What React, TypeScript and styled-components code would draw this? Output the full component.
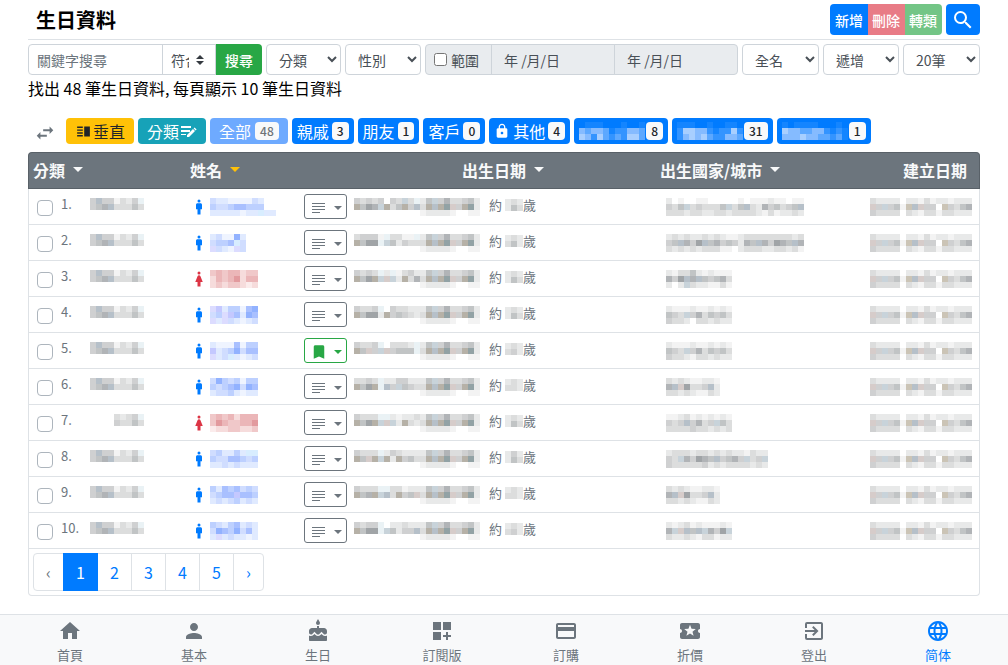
import React from "react";
import styled, { createGlobalStyle, css } from "styled-components";
import {
  MdSearch,
  MdSwapHoriz,
  MdVerticalSplit,
  MdLock,
  MdMan,
  MdWoman,
  MdBookmark,
  MdHome,
  MdPerson,
  MdCake,
  MdDashboardCustomize,
  MdCreditCard,
  MdLocalPlay,
  MdExitToApp,
  MdLanguage,
} from "react-icons/md";

const color = {
  primary: "#007bff",
  success: "#28a745",
  danger: "#dc3545",
  warning: "#ffc107",
  info: "#17a2b8",
  grey: "#6c757d",
  dark: "#212529",
  field: "#495057",
  border: "#dee2e6",
  fieldBorder: "#ced4da",
  disabled: "#e9ecef",
  light: "#f8f9fa",
};

const GlobalStyle = createGlobalStyle`
  *, *::before, *::after { box-sizing: border-box; }
  body {
    margin: 0;
    background: #fff;
    color: ${color.dark};
    font-family: "Noto Sans CJK TC", "Noto Sans", sans-serif;
    font-size: 16px;
    line-height: 24px;
  }
  button, input, select { font-family: inherit; margin: 0; }
  svg { display: block; flex: none; }
`;

const Page = styled.div`
  display: flex;
  flex-direction: column;
  min-height: 100vh;
`;

const Content = styled.main`
  padding: 0 28px;
`;

/* ---------- Title ---------- */

const TitleBar = styled.header`
  display: flex;
  align-items: center;
  justify-content: space-between;
  height: 40px;
  padding-left: 8px;
  border-bottom: 1px solid ${color.border};
`;

const Title = styled.h1`
  margin: 0;
  font-size: 20px;
  font-weight: 700;
  color: #000;
`;

const Actions = styled.div`
  display: flex;
  gap: 4px;
`;

const ButtonGroup = styled.div`
  display: flex;
  border-radius: 4px;
  overflow: hidden;
`;

const ActionButton = styled.button<{ $tone: string }>`
  display: flex;
  align-items: center;
  height: 31px;
  padding: 0 5px;
  border: 0;
  background: ${(p) => p.$tone};
  color: #fff;
  font-size: 14px;
  font-weight: 500;
  &:disabled {
    opacity: 0.65;
  }
  & + & {
    padding-left: 4px;
  }
`;

const SearchToggle = styled(ActionButton)`
  border-radius: 4px;
`;

/* ---------- Filters ---------- */

const Filters = styled.form`
  display: grid;
  grid-template-columns: 234fr 75fr 76fr 313fr 77fr 76fr 77fr;
  gap: 4px;
  padding-top: 4px;
`;

const FieldGroup = styled.div`
  display: flex;
  min-width: 0;
`;

const fieldBase = css`
  height: 31px;
  min-width: 0;
  border: 1px solid ${color.fieldBorder};
  background: #fff;
  color: ${color.field};
  font-size: 14px;
`;

const KeywordInput = styled.input`
  ${fieldBase}
  flex: 1;
  padding: 4px 8px;
  border-radius: 4px 0 0 4px;
  &::placeholder {
    color: ${color.grey};
    opacity: 1;
  }
`;

const MatchBox = styled.div`
  position: relative;
  width: 54px;
  margin-left: -1px;
`;

const MatchSelect = styled.select`
  ${fieldBase}
  appearance: none;
  width: 100%;
  padding: 0 26px 0 8px;
  border-radius: 0;
`;

const MatchArrows = styled.svg`
  position: absolute;
  top: 11px;
  right: 12px;
  pointer-events: none;
`;

const SubmitButton = styled.button`
  width: 46px;
  height: 31px;
  padding: 0;
  border: 0;
  border-radius: 0 4px 4px 0;
  background: ${color.success};
  color: #fff;
  font-size: 14px;
  font-weight: 500;
`;

const FilterSelect = styled.select`
  ${fieldBase}
  width: 100%;
  padding: 4px 0 4px 8px;
  border-radius: 4px;
`;

const RangeLabel = styled.label`
  ${fieldBase}
  display: flex;
  align-items: center;
  gap: 4px;
  width: 67px;
  padding-left: 8px;
  background: ${color.disabled};
  border-radius: 4px 0 0 4px;
  input {
    width: 13px;
    height: 13px;
  }
`;

const DateInput = styled.input`
  ${fieldBase}
  flex: 1;
  width: 0;
  margin-left: -1px;
  padding: 4px 12px;
  background: ${color.disabled};
  &:last-child {
    border-radius: 0 4px 4px 0;
  }
`;

const Summary = styled.p`
  margin: 1px 0 0;
  color: #000;
`;

/* ---------- Category bar ---------- */

const CategoryBar = styled.nav`
  display: flex;
  flex-wrap: wrap;
  align-items: center;
  gap: 4px;
  padding: 18px 0 8px 6px;
`;

const SwapButton = styled.button`
  display: flex;
  width: 28px;
  height: 26px;
  padding: 4px 0 0;
  border: 0;
  background: none;
  color: ${color.grey};
`;

const Pill = styled.button<{ $tone?: string; $wide?: boolean; $tight?: boolean }>`
  display: flex;
  align-items: center;
  gap: ${(p) => (p.$tone || p.$tight ? 1 : p.$wide ? 4 : 3)}px;
  height: 26px;
  padding: 0 ${(p) => (p.$wide ? 9 : 5)}px;
  border: 0;
  border-radius: 4px;
  background: ${(p) => p.$tone || color.primary};
  color: ${(p) => (p.$tone === color.warning ? color.dark : "#fff")};
  font-size: 16px;
  line-height: 24px;
  white-space: nowrap;
  &:disabled {
    background: #6eaaff;
  }
`;

const Count = styled.span<{ $muted?: boolean }>`
  height: 18px;
  padding: 0 5px;
  border-radius: 4px;
  background: ${color.light};
  color: ${(p) => (p.$muted ? "#6f7478" : color.dark)};
  font-size: 12px;
  font-weight: 500;
  line-height: 18px;
`;

/* ---------- Records ---------- */

const Records = styled.table`
  width: 100%;
  table-layout: fixed;
  border-collapse: separate;
  border-spacing: 0;
  font-size: 13px;
  color: ${color.grey};
`;

const Col = styled.col<{ $w?: number }>`
  width: ${(p) => (p.$w ? `${p.$w}px` : "auto")};
`;

const HeadCell = styled.th<{ $align?: string }>`
  height: 37px;
  padding: 0 4px 2px;
  border: 0 solid #596168;
  border-width: 1px 0;
  background: ${color.grey};
  color: ${color.light};
  font-size: 16px;
  font-weight: 700;
  text-align: ${(p) => p.$align || "left"};
  white-space: nowrap;
  &:first-child {
    border-left-width: 1px;
    border-top-left-radius: 4px;
  }
  &:last-child {
    padding-right: 12px;
    border-right-width: 1px;
    border-top-right-radius: 4px;
  }
`;

const SortButton = styled.button`
  display: inline-flex;
  align-items: center;
  gap: 8px;
  padding: 0;
  border: 0;
  background: none;
  color: inherit;
  font-size: 16px;
  font-weight: 700;
  line-height: 24px;
`;

const Caret = styled.span<{ $tone?: string }>`
  border: 5px solid transparent;
  border-top-color: ${(p) => p.$tone || "currentColor"};
  border-bottom: 0;
`;

const Cell = styled.td`
  height: 36px;
  padding: 0;
  border-bottom: 1px solid ${color.border};
  &:first-child {
    border-left: 1px solid ${color.border};
  }
  &:last-child {
    padding-right: 7px;
    border-right: 1px solid ${color.border};
  }
`;

const CellLine = styled.div<{ $gap?: number; $indent?: number; $end?: boolean }>`
  display: flex;
  align-items: center;
  gap: ${(p) => p.$gap || 0}px;
  padding-left: ${(p) => p.$indent || 0}px;
  justify-content: ${(p) => (p.$end ? "flex-end" : "flex-start")};
  line-height: 20px;
`;

const RowCheck = styled.input`
  appearance: none;
  width: 16px;
  height: 16px;
  margin-top: 3px;
  border: 1px solid #adb5bd;
  border-radius: 4px;
  background: #fff;
`;

const Category = styled.span`
  display: flex;
  align-items: center;
  justify-content: space-between;
  width: 83px;
  height: 24px;
  padding-bottom: 6px;
`;

const Age = styled.span`
  display: flex;
  align-items: center;
  padding: 0 0 4px 6px;
  svg {
    margin-left: 3px;
  }
`;

const MenuButton = styled.button<{ $saved?: boolean }>`
  display: flex;
  align-items: center;
  justify-content: space-between;
  width: 43px;
  height: 25px;
  margin-left: 2px;
  padding: 2px 4px 0 5px;
  border: 1px solid ${(p) => (p.$saved ? color.success : color.grey)};
  border-radius: 3px;
  background: #fff;
  color: ${(p) => (p.$saved ? color.success : color.grey)};
`;

const SmallCaret = styled(Caret)`
  border-width: 4px 4px 0;
`;

const Footer = styled.div`
  padding: 4px;
  border: 1px solid ${color.border};
  border-top: 0;
  border-radius: 0 0 4px 4px;
`;

const Pager = styled.nav`
  display: flex;
`;

const PageLink = styled.a<{ $current?: boolean; $edge?: boolean }>`
  display: flex;
  align-items: center;
  justify-content: center;
  width: ${(p) => (p.$edge ? 31 : 35)}px;
  height: 38px;
  border: 1px solid ${(p) => (p.$current ? color.primary : color.border)};
  background: ${(p) => (p.$current ? color.primary : "#fff")};
  color: ${(p) => (p.$current ? "#fff" : color.primary)};
  position: relative;
  z-index: ${(p) => (p.$current ? 1 : 0)};
  text-decoration: none;
  &:first-child {
    border-radius: 4px 0 0 4px;
    color: ${color.grey};
  }
  &:last-child {
    border-radius: 0 4px 4px 0;
  }
  & + & {
    margin-left: -1px;
  }
`;

/* ---------- Bottom navigation ---------- */

const BottomNav = styled.nav`
  display: flex;
  height: 51px;
  margin-top: auto;
  padding: 4px 8px 0;
  border-top: 1px solid ${color.border};
  background: ${color.light};
`;

const NavItem = styled.a<{ $active?: boolean }>`
  flex: 1;
  display: flex;
  flex-direction: column;
  align-items: center;
  color: ${(p) => (p.$active ? color.primary : color.grey)};
  font-size: 13px;
  line-height: 24px;
  text-decoration: none;
`;

/* ---------- Icons ---------- */

const NoteIcon = () => (
  <svg width="17" height="16" viewBox="0 0 17 16" fill="currentColor" aria-hidden="true">
    <path d="M2 3h13v1H2zM2 6h13v1H2zM2 9h13v1H2zM2 12h8v1H2z" />
  </svg>
);

const EditListIcon = () => (
  <svg width="17" height="16" viewBox="0 0 17 16" fill="currentColor" aria-hidden="true">
    <path d="M1 3h10v2H1zM1 7h9v2H1zM1 11h5v1H1z" />
    <path d="M7 14v-2l6-6 2 2-6 6zM13.600 5.400l1-1 2 2-1 1z" />
  </svg>
);

/* ---------- Censored values, drawn as 6px tiles ---------- */

type Palette = Record<string, string>;

const greys: Palette = {
  a: "#f3f3f3", b: "#e8e9e9", c: "#dcdddd", d: "#cfd0d1", e: "#c1c4c5",
  f: "#b1b4b7", g: "#a0a4a7", h: "#b6c0c9", i: "#cbc4b6", j: "#d6ccca",
  k: "#c8d3da", l: "#92a2a5", m: "#b6b1a7", n: "#eaf2f5", o: "#e0deee",
};
const blues: Palette = {
  a: "#eff4ff", b: "#e0eaff", c: "#d0ddff", d: "#bdd0ff", e: "#a9c0ff",
  f: "#92b2ff", g: "#dcdcff", h: "#c4c8ff", n: "#d8edff",
};
const reds: Palette = {
  a: "#fbecec", b: "#f6dcdc", c: "#f0c8c9", d: "#ebb6b8", e: "#e29a9e",
};
const whites: Palette = {
  a: "#1485ff", b: "#3394ff", c: "#5ca8ff", d: "#85bbff", e: "#a8cfff",
};

function Mosaic({ rows, palette = greys }: { rows: string[]; palette?: Palette }) {
  const cols = Math.max(...rows.map((r) => r.length));
  return (
    <svg width={cols * 6} height={rows.length * 6} shapeRendering="crispEdges" aria-hidden="true">
      {rows.map((row, y) =>
        [...row].map((c, x) =>
          palette[c] ? (
            <rect key={`${x}-${y}`} x={x * 6} y={y * 6} width={6} height={6} fill={palette[c]} />
          ) : null
        )
      )}
    </svg>
  );
}

/* ---------- Data ---------- */

const fullCategory = ["dhddacbdn", "defhcccec"];
const shortCategory = ["cbcdn", "dccec"];
const dateTail = ["bekdfccdeb", "cmhmljdmlb", "abbbba..aa"];
const dateHead: [string, string][] = [
  ["dcdcd.dckcn", "megfkmcemdh"],
  ["cdddanccaan", "meggnkebdcc"],
  ["dcdcnbnacdb", "megmkjkbmcf"],
  ["dccdn.dccbb", "meggbmdedcb"],
  ["dccdn.cccbn", "mejdkjdeeen"],
  ["ccdcnbbddbb", "megmnhdkedc"],
  ["dcccnnbabbc", "megmkjkbmcb"],
  ["dcccnbdcbbb", "mejmkmbmdec"],
  ["dcccnnccabb", "mefmkhcmdej"],
  ["dcddn.bbcbb", "meggnkebddh"],
];
const createdTiles = ["cbbbb.bbacabbabbb", "jdkdeaihjdd.idcef", "dcccc.cbaccaccbbb"];

type Person = {
  female?: boolean;
  saved?: boolean;
  name: string[];
  age: string[];
  place: string[];
};

const people: Person[] = [
  { name: ["cbbaaaacb", "dccdeeddd", "bbbbbabbnbb"], age: ["bcb", "bec"],
    place: ["b.a..aa.....a.aaabaa.aa", "dcekcdcccekcehcbfdecdeh", "cccbccbbccbccccbacabbcb"] },
  { name: ["bcaafb", "cddenc", "gcbagc"], age: ["bcb", "ceb"],
    place: ["bcbcbbcbcbaabccccccccbc", "dehfdghefdedbfehfdgfehf", "cbcbcbcccaa.bcccbbccbca"] },
  { female: true, name: ["cdcddbcc", "bdcdebdd", "bcbccbab"], age: ["bcb", "bec"],
    place: ["baccebabaaa", "fdghfhedefc", "b.bkcbbaaca"] },
  { name: ["ghbddaef", "cdghebfe", "gbgcbabc"], age: ["bcb", "bec"],
    place: ["baaabaababa", "edckdfcedec", "dccb.ccbcbb"] },
  { saved: true, name: ["baaaeadd", "hbcdfcee", "gbcnbabc"], age: ["bcb", "cdb"],
    place: ["baaabaababa", "edckdfcedec", "dccbaccbcbb"] },
  { name: ["cfdcdadd", "dcdefcfe", "bccdbabb"], age: ["bcb", "ccb"],
    place: ["cbcbaabba", "fhjgccdhb", "ccbcbaacb"] },
  { female: true, name: ["cdcdbddd", "cedccdde", "abbccbbc"], age: ["bcb", "bec"],
    place: ["aabcabababa", "dcdhdfcdkec", "ccccdccbcbc"] },
  { name: ["cdbbdbnn", "dcceedcd", "bbcbcbbb"], age: ["bdb", "bec"],
    place: ["bcccbccbcbcbbacbb", "dckfdgfehdefdkcdk", "dcccccdbcbccccbcb"] },
  { name: ["dbedecdc", "cdeeheed", "bcbcdbcb"], age: ["bcb", "ccb"],
    place: ["cbcbaabba", "fhjgccdhb", "ccbcbaacb"] },
  { name: ["dcbdebcb", "cfedfceb", "bgbcbbab"], age: ["bcb", "cdb"],
    place: ["babcabaaaba", "fkjhehkfdgk", "cbbcbaccabb"] },
];

const navItems = [
  { label: "首頁", Icon: MdHome },
  { label: "基本", Icon: MdPerson },
  { label: "生日", Icon: MdCake },
  { label: "訂閱版", Icon: MdDashboardCustomize },
  { label: "訂購", Icon: MdCreditCard },
  { label: "折價", Icon: MdLocalPlay },
  { label: "登出", Icon: MdExitToApp },
  { label: "简体", Icon: MdLanguage, active: true },
];

const groups: { text?: string; tiles?: string[]; count: number; locked?: boolean }[] = [
  { text: "親戚", count: 3 },
  { text: "朋友", count: 1 },
  { text: "客戶", count: 0 },
  { text: "其他", count: 4, locked: true },
  { tiles: [".aaa...a..a", "dcddcabbddc", "edbecbcbeec"], count: 8 },
  { tiles: ["aaa..a..aa.", "beeddbabbeb", "bdedecbbddc"], count: 31 },
  { tiles: ["a.aaaa...a.", "eddccddbaba", "dddeddccbca"], count: 1 },
];

export default function App() {
  return (
    <Page>
      <GlobalStyle />
      <Content>
        <TitleBar>
          <Title>生日資料</Title>
          <Actions>
            <ButtonGroup>
              <ActionButton type="button" $tone={color.primary}>新增</ActionButton>
              <ActionButton type="button" $tone={color.danger} disabled>刪除</ActionButton>
              <ActionButton type="button" $tone={color.success} disabled>轉類</ActionButton>
            </ButtonGroup>
            <SearchToggle type="button" $tone={color.primary} aria-label="搜尋">
              <MdSearch size={24} />
            </SearchToggle>
          </Actions>
        </TitleBar>

        <Filters onSubmit={(e) => e.preventDefault()}>
          <FieldGroup>
            <KeywordInput size={1} placeholder="關鍵字搜尋" aria-label="關鍵字搜尋" />
            <MatchBox>
              <MatchSelect aria-label="符合">
                <option>符合</option>
              </MatchSelect>
              <MatchArrows width="8" height="10" viewBox="0 0 8 10" fill="#343a40">
                <path d="M4 0L0 4h8zM4 10L0 6h8z" />
              </MatchArrows>
            </MatchBox>
            <SubmitButton>搜尋</SubmitButton>
          </FieldGroup>
          <FilterSelect aria-label="分類"><option>分類</option></FilterSelect>
          <FilterSelect aria-label="性別"><option>性別</option></FilterSelect>
          <FieldGroup>
            <RangeLabel>
              <input type="checkbox" />
              範圍
            </RangeLabel>
            <DateInput disabled defaultValue="年 /月/日" aria-label="開始日期" />
            <DateInput disabled defaultValue="年 /月/日" aria-label="結束日期" />
          </FieldGroup>
          <FilterSelect aria-label="姓名格式"><option>全名</option></FilterSelect>
          <FilterSelect aria-label="排序"><option>遞增</option></FilterSelect>
          <FilterSelect aria-label="每頁筆數"><option>20筆</option></FilterSelect>
        </Filters>

        <Summary>找出 48 筆生日資料, 每頁顯示 10 筆生日資料</Summary>

        <CategoryBar>
          <SwapButton type="button" aria-label="切換">
            <MdSwapHoriz size={22} />
          </SwapButton>
          <Pill type="button" $wide $tone={color.warning}>
            <MdVerticalSplit size={17} />
            垂直
          </Pill>
          <Pill type="button" $wide $tone={color.info}>
            分類
            <EditListIcon />
          </Pill>
          <Pill type="button" $wide disabled>
            全部 <Count $muted>48</Count>
          </Pill>
          {groups.map((g, i) => (
            <Pill type="button" key={i} $tight={!!g.tiles}>
              {g.locked && <MdLock size={16} />}
              {g.text}
              {g.tiles && <Mosaic rows={g.tiles} palette={whites} />}
              <Count>{g.count}</Count>
            </Pill>
          ))}
        </CategoryBar>

        <Records>
          <colgroup>
            <Col $w={158} />
            <Col $w={116} />
            <Col $w={48} />
            <Col $w={306} />
            <Col />
            <Col $w={120} />
          </colgroup>
          <thead>
            <tr>
              <HeadCell><SortButton type="button">分類 <Caret /></SortButton></HeadCell>
              <HeadCell><SortButton type="button">姓名 <Caret $tone={color.warning} /></SortButton></HeadCell>
              <HeadCell />
              <HeadCell $align="center"><SortButton type="button">出生日期 <Caret /></SortButton></HeadCell>
              <HeadCell><SortButton type="button">出生國家/城市 <Caret /></SortButton></HeadCell>
              <HeadCell $align="right">建立日期</HeadCell>
            </tr>
          </thead>
          <tbody>
            {people.map((p, i) => (
              <tr key={i}>
                <Cell>
                  <CellLine $gap={8} $indent={8}>
                    <RowCheck type="checkbox" aria-label={`${i + 1}`} />
                    <Category>
                      {i + 1}.
                      <Mosaic rows={i === 6 ? shortCategory : fullCategory} />
                    </Category>
                  </CellLine>
                </Cell>
                <Cell>
                  <CellLine $gap={2} $indent={4}>
                    {p.female ? (
                      <MdWoman size={18} color={color.danger} />
                    ) : (
                      <MdMan size={18} color={color.primary} />
                    )}
                    <Mosaic rows={p.name} palette={p.female ? reds : blues} />
                  </CellLine>
                </Cell>
                <Cell>
                  <MenuButton type="button" $saved={p.saved} aria-label="選單">
                    {p.saved ? <MdBookmark size={18} /> : <NoteIcon />}
                    <SmallCaret />
                  </MenuButton>
                </Cell>
                <Cell>
                  <CellLine $gap={3} $indent={4}>
                    <Mosaic
                      rows={[
                        dateHead[i][0] + dateTail[0],
                        dateHead[i][1] + dateTail[1],
                        "..........." + dateTail[2],
                      ]}
                    />
                    <Age>
                      約
                      <Mosaic rows={p.age} />
                      歲
                    </Age>
                  </CellLine>
                </Cell>
                <Cell>
                  <CellLine $indent={10}>
                    <Mosaic rows={p.place} />
                  </CellLine>
                </Cell>
                <Cell>
                  <CellLine $end>
                    <Mosaic rows={createdTiles} />
                  </CellLine>
                </Cell>
              </tr>
            ))}
          </tbody>
        </Records>

        <Footer>
          <Pager aria-label="分頁">
            <PageLink href="#prev" $edge>‹</PageLink>
            {[1, 2, 3, 4, 5].map((n) => (
              <PageLink key={n} href={`#${n}`} $current={n === 1}>{n}</PageLink>
            ))}
            <PageLink href="#next" $edge>›</PageLink>
          </Pager>
        </Footer>
      </Content>

      <BottomNav>
        {navItems.map(({ label, Icon, active }) => (
          <NavItem key={label} href="#" $active={active}>
            <Icon size={24} />
            {label}
          </NavItem>
        ))}
      </BottomNav>
    </Page>
  );
}
